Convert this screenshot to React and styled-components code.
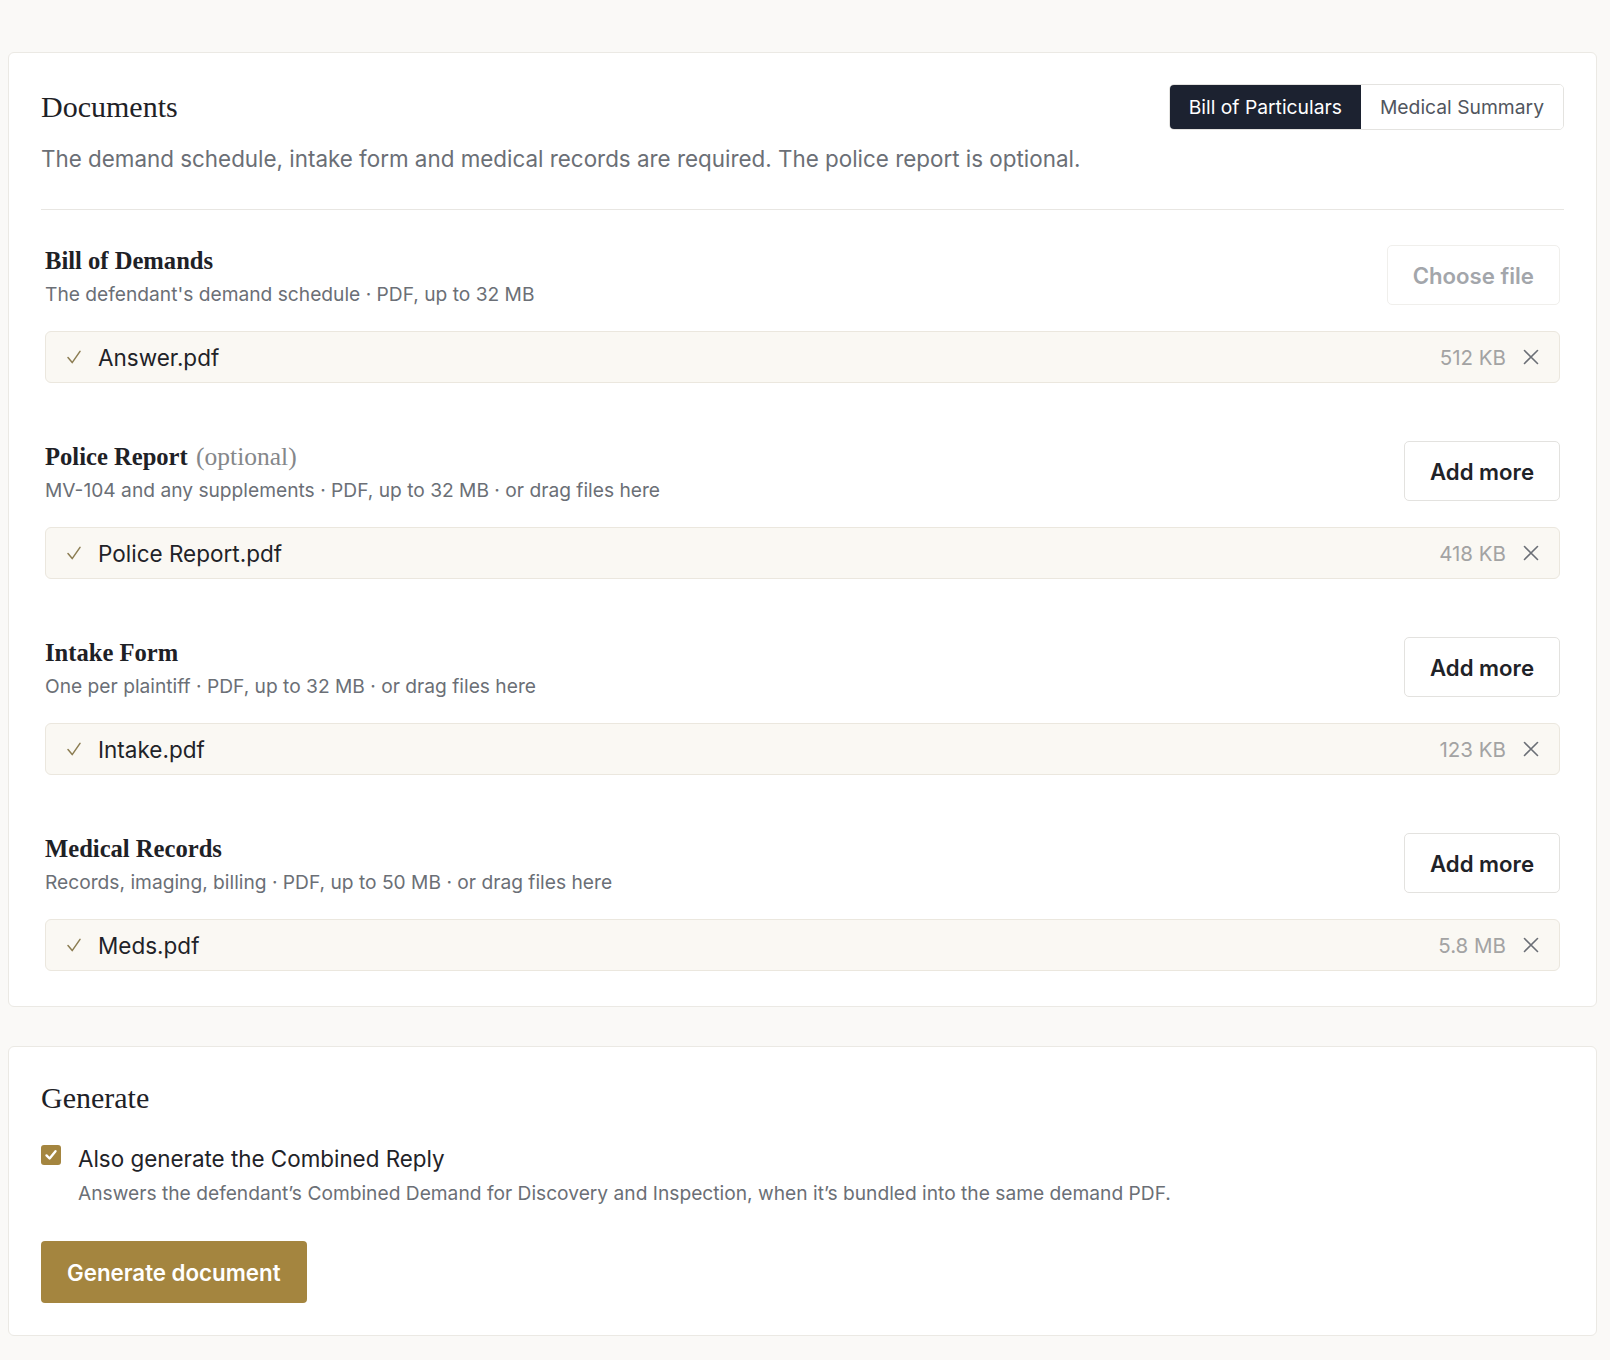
import React from 'react';
import styled, { createGlobalStyle } from 'styled-components';

const GlobalStyle = createGlobalStyle`
  html, body {
    margin: 0;
    padding: 0;
    background: #faf9f7;
    font-family: Inter, 'Liberation Sans', sans-serif;
    color: #1f2328;
  }
`;

const SERIF = `'Liberation Serif', 'DejaVu Serif', serif`;

const Page = styled.div`
  box-sizing: border-box;
  min-height: 1360px;
  padding: 52px 13px 24px 8px;
  display: flex;
  flex-direction: column;
  gap: 39px;
`;

const Card = styled.section`
  background: #fff;
  border: 1px solid #ebe9e4;
  border-radius: 6px;
  padding: 31px 32px ${({ $bottom }) => $bottom || 32}px;
`;

const CardHead = styled.div`
  display: flex;
  align-items: center;
  justify-content: space-between;
  min-height: 46px;
`;

const CardTitle = styled.h2`
  margin: 0;
  font-family: ${SERIF};
  font-weight: 400;
  font-size: 30px;
  line-height: 40px;
  color: #1e2126;
`;

const Tabs = styled.div`
  display: inline-flex;
  border: 1px solid #e4e3e0;
  border-radius: 5px;
  overflow: hidden;
`;

const Tab = styled.button`
  height: 44px;
  padding: 0 19px;
  border: 0;
  background: ${({ $active }) => ($active ? '#1c2230' : '#fff')};
  color: ${({ $active }) => ($active ? '#fff' : '#51565e')};
  font-family: Inter, sans-serif;
  font-size: 19.3px;
  cursor: pointer;
`;

const Lead = styled.p`
  margin: 12px 0 0;
  font-size: 22.4px;
  line-height: 33px;
  color: #6b6f76;
`;

const Divider = styled.hr`
  margin: 34px 0 35px;
  border: 0;
  border-top: 1px solid #e8e6e2;
`;

const UploadList = styled.div`
  display: flex;
  flex-direction: column;
  gap: 58px;
  padding: 0 4px;
`;

const Upload = styled.div`
  display: flex;
  flex-direction: column;
  gap: 23px;
`;

const UploadHead = styled.div`
  display: flex;
  align-items: flex-start;
  justify-content: space-between;
  gap: 24px;
`;

const UploadTitle = styled.h3`
  margin: 0;
  font-family: ${SERIF};
  font-weight: 700;
  font-size: 24.6px;
  line-height: 32px;
  color: #1e2126;
`;

const Optional = styled.span`
  margin-left: 2px;
  font-weight: 400;
  font-size: 25.5px;
  color: #85878a;
`;

const UploadHint = styled.p`
  margin: 4px 0 0;
  font-size: 19.2px;
  line-height: 27px;
  color: #6b6f76;
`;

const FileButton = styled.button`
  flex: none;
  height: 60px;
  padding: 0 25px;
  background: #fff;
  border: 1px solid ${({ disabled }) => (disabled ? '#f0efec' : '#e3e2df')};
  border-radius: 5px;
  font-family: Inter, sans-serif;
  font-weight: 600;
  font-size: 22.2px;
  color: ${({ disabled }) => (disabled ? '#a3a6ab' : '#1f2328')};
`;

const FileRow = styled.div`
  box-sizing: border-box;
  height: 52px;
  display: flex;
  align-items: center;
  padding: 0 20px 0 21px;
  background: #faf8f3;
  border: 1px solid #ebe7de;
  border-radius: 6px;
`;

const FileName = styled.span`
  flex: 1;
  margin-left: 17px;
  font-size: 22.5px;
  color: #1f2328;
`;

const FileSize = styled.span`
  margin-right: 17px;
  font-size: 20.5px;
  color: #a3a3a3;
`;

const CheckRow = styled.label`
  display: grid;
  grid-template-columns: 20px 1fr;
  column-gap: 17px;
  margin-top: 25px;
`;

const Box = styled.span`
  width: 20px;
  height: 20px;
  margin-top: 2px;
  border-radius: 3px;
  background: #a4853f;
  display: flex;
  align-items: center;
  justify-content: center;
`;

const CheckLabel = styled.span`
  font-size: 22.4px;
  line-height: 31px;
  color: #1f2328;
`;

const CheckHelp = styled.span`
  grid-column: 2;
  margin-top: 5px;
  font-size: 19.2px;
  line-height: 28px;
  color: #6b6f76;
`;

const PrimaryButton = styled.button`
  margin-top: 34px;
  height: 62px;
  padding: 0 26px;
  border: 0;
  border-radius: 4px;
  background: #a4853f;
  color: #fff;
  font-family: Inter, sans-serif;
  font-weight: 600;
  font-size: 22.3px;
`;

const CheckIcon = () => (
  <svg width="14" height="14" viewBox="0 0 14 14" fill="none">
    <path d="M1 7.6 L5.2 12.6 L13 1.4" stroke="#8c7d52" strokeWidth="1.5" strokeLinecap="round" strokeLinejoin="round" />
  </svg>
);

const CloseIcon = () => (
  <svg width="16" height="16" viewBox="0 0 16 16" fill="none">
    <path d="M1.5 1.5 L14.5 14.5 M14.5 1.5 L1.5 14.5" stroke="#6b6f76" strokeWidth="1.6" strokeLinecap="round" />
  </svg>
);

const uploads = [
  { title: 'Bill of Demands', hint: "The defendant's demand schedule · PDF, up to 32 MB", button: 'Choose file', disabled: true, file: 'Answer.pdf', size: '512 KB' },
  { title: 'Police Report', optional: true, hint: 'MV-104 and any supplements · PDF, up to 32 MB · or drag files here', button: 'Add more', file: 'Police Report.pdf', size: '418 KB' },
  { title: 'Intake Form', hint: 'One per plaintiff · PDF, up to 32 MB · or drag files here', button: 'Add more', file: 'Intake.pdf', size: '123 KB' },
  { title: 'Medical Records', hint: 'Records, imaging, billing · PDF, up to 50 MB · or drag files here', button: 'Add more', file: 'Meds.pdf', size: '5.8 MB' },
];

const App = () => {
  return (
    <>
      <GlobalStyle />
      <Page>
        <Card $bottom={35}>
          <CardHead>
            <CardTitle>Documents</CardTitle>
            <Tabs>
              <Tab $active>Bill of Particulars</Tab>
              <Tab>Medical Summary</Tab>
            </Tabs>
          </CardHead>
          <Lead>The demand schedule, intake form and medical records are required. The police report is optional.</Lead>
          <Divider />
          <UploadList>
            {uploads.map((u) => (
              <Upload key={u.title}>
                <UploadHead>
                  <div>
                    <UploadTitle>
                      {u.title}
                      {u.optional && <Optional> (optional)</Optional>}
                    </UploadTitle>
                    <UploadHint>{u.hint}</UploadHint>
                  </div>
                  <FileButton disabled={u.disabled}>{u.button}</FileButton>
                </UploadHead>
                <FileRow>
                  <CheckIcon />
                  <FileName>{u.file}</FileName>
                  <FileSize>{u.size}</FileSize>
                  <CloseIcon />
                </FileRow>
              </Upload>
            ))}
          </UploadList>
        </Card>

        <Card>
          <CardTitle>Generate</CardTitle>
          <CheckRow>
            <Box>
              <svg width="14" height="14" viewBox="0 0 14 14" fill="none">
                <path d="M2.5 7.4 L5.6 10.5 L11.5 3.2" stroke="#fff" strokeWidth="2.4" strokeLinecap="round" strokeLinejoin="round" />
              </svg>
            </Box>
            <CheckLabel>Also generate the Combined Reply</CheckLabel>
            <CheckHelp>
              Answers the defendant’s Combined Demand for Discovery and Inspection, when it’s bundled into the same demand PDF.
            </CheckHelp>
          </CheckRow>
          <PrimaryButton>Generate document</PrimaryButton>
        </Card>
      </Page>
    </>
  );
};

export default App;
